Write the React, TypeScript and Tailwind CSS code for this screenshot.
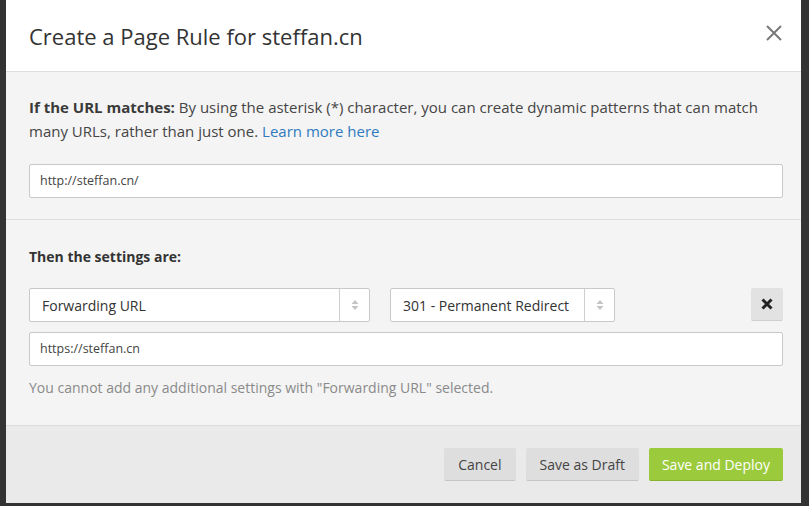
import React from "react";

function Arrows() {
  return (
    <div className="flex w-[30px] items-center justify-center border-l border-[#cfcfcf] self-stretch">
      <svg width="8" height="12" viewBox="0 0 8 12">
        <path d="M4 1 L7.5 5 L0.5 5 Z" fill="#c4c4c4" />
        <path d="M4 11 L7.5 7 L0.5 7 Z" fill="#c4c4c4" />
      </svg>
    </div>
  );
}

export default function App() {
  return (
    <div
      className="w-[809px] h-[506px] bg-[#333333] overflow-hidden"
      style={{ fontFamily: '"Open Sans", "Liberation Sans", sans-serif' }}
    >
      <div className="ml-[6px] w-[795px] h-[503px] flex flex-col bg-white">
        <div className="h-[72px] flex items-center justify-between pl-[23px] pr-[19px] border-b border-[#dedede]">
          <h1 className="text-[22px] text-[#333] font-normal leading-none">
            Create a Page Rule for steffan.cn
          </h1>
          <svg width="16" height="16" viewBox="0 0 16 16" className="mb-[6px]">
            <path d="M1 1 L15 15 M15 1 L1 15" stroke="#7a7a7a" strokeWidth="2" />
          </svg>
        </div>
        <div className="bg-[#f4f4f4] pl-[23px] pr-[18px] pt-[23px] pb-[21px] border-b border-[#dcdcdc]">
          <p className="text-[15px] leading-[24px] text-[#454545]">
            <b className="font-bold text-[#3a3a3a]">If the URL matches:</b> By using the asterisk (*) character, you can create dynamic patterns that can match many URLs, rather than just one.{" "}
            <a className="text-[#2f7bbf]">Learn more here</a>
          </p>
          <div className="mt-[21px] h-[34px] bg-white border border-[#c9c9c9] rounded-[2px] flex items-center px-[10px] text-[12.5px] text-[#444]">
            http://steffan.cn/
          </div>
        </div>
        <div className="bg-[#f4f4f4] pl-[23px] pr-[18px] pt-[25px] pb-[27px] border-b border-[#dcdcdc]">
          <p className="text-[14px] leading-[24px] font-bold text-[#333]">Then the settings are:</p>
          <div className="mt-[19px] flex items-start">
            <div className="w-[341px] h-[34px] bg-white border border-[#c9c9c9] rounded-[2px] flex items-center">
              <span className="flex-1 pl-[12px] text-[14px] text-[#333]">Forwarding URL</span>
              <Arrows />
            </div>
            <div className="ml-[20px] w-[225px] h-[34px] bg-white border border-[#c9c9c9] rounded-[2px] flex items-center">
              <span className="flex-1 pl-[12px] text-[14px] text-[#333]">301 - Permanent Redirect</span>
              <Arrows />
            </div>
            <div className="ml-auto w-[32px] h-[33px] bg-[#e2e2e2] rounded-[2px] border-b border-[#cfcfcf] flex items-center justify-center">
              <svg width="12" height="12" viewBox="0 0 12 12">
                <path d="M1.5 1.5 L10.5 10.5 M10.5 1.5 L1.5 10.5" stroke="#222" strokeWidth="3" />
              </svg>
            </div>
          </div>
          <div className="mt-[10px] h-[34px] bg-white border border-[#c9c9c9] rounded-[2px] flex items-center px-[10px] text-[12.5px] text-[#444]">
            https://steffan.cn
          </div>
          <p className="mt-[12px] text-[14px] leading-[20px] text-[#8a8a8a]">
            You cannot add any additional settings with "Forwarding URL" selected.
          </p>
        </div>
        <div className="flex-1 bg-[#eaeaea] flex justify-end items-start pt-[22px] pr-[18px] gap-[10px]">
          <button className="h-[33px] px-[14px] bg-[#dedede] border-b border-[#c6c6c6] rounded-[2px] text-[14px] text-[#444]">
            Cancel
          </button>
          <button className="h-[33px] px-[14px] bg-[#dedede] border-b border-[#c6c6c6] rounded-[2px] text-[14px] text-[#444]">
            Save as Draft
          </button>
          <button className="h-[33px] px-[13px] bg-[#9bcb3c] border-b border-[#86b22f] rounded-[2px] text-[14px] text-white">
            Save and Deploy
          </button>
        </div>
      </div>
    </div>
  );
}
